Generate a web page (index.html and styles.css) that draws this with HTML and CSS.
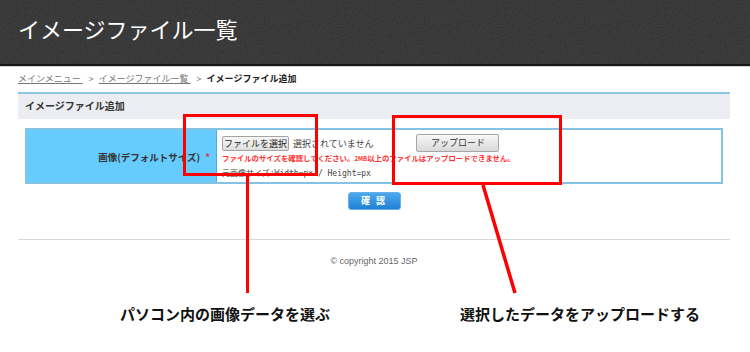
FILE: index.html
```html
<!DOCTYPE html>
<html lang="ja">
<head>
<meta charset="utf-8">
<title>イメージファイル一覧</title>
<link rel="stylesheet" href="styles.css">
</head>
<body>
<div class="page">
  <header class="hdr"><h1 class="hdr-title">イメージファイル一覧</h1></header>
  <main class="wrap">
    <nav class="crumbs">
      <a class="crumb-link" href="#">メインメニュー&nbsp;</a><span class="sep">&gt;</span><a class="crumb-link" href="#">イメージファイル一覧&nbsp;</a><span class="sep">&gt;</span><strong class="crumb-cur">イメージファイル追加</strong>
    </nav>
    <section class="panel">
      <h2 class="panel-title">イメージファイル追加</h2>
      <div class="form-row">
        <div class="label">画像(デフォルトサイズ)<span class="req">*</span></div>
        <div class="field">
          <div class="line1">
            <span class="btn-file">ファイルを選択</span>
            <span class="nofile">選択されていません</span>
            <span class="btn-up">アップロード</span>
          </div>
          <p class="warn">ファイルのサイズを確認してください。<span class="mb">2MB</span>以上のファイルはアップロードできません。</p>
          <p class="dim">元画像サイズ:Width=px / Height=px</p>
        </div>
      </div>
      <div class="actions"><span class="btn-ok">確 認</span></div>
    </section>
    <footer class="foot">© copyright 2015 JSP</footer>
  </main>
  <svg class="marks" width="750" height="352" viewBox="0 0 750 352" aria-hidden="true">
    <rect x="184.5" y="115.5" width="132" height="59" fill="none" stroke="#ff0000" stroke-width="3"/>
    <rect x="393.5" y="116.5" width="167" height="67" fill="none" stroke="#ff0000" stroke-width="3"/>
    <line x1="247.5" y1="176" x2="247.5" y2="293" stroke="#ff0000" stroke-width="3"/>
    <line x1="483" y1="185" x2="515" y2="293" stroke="#ff0000" stroke-width="3.5"/>
  </svg>
  <p class="cap cap1">パソコン内の画像データを選ぶ</p>
  <p class="cap cap2">選択したデータをアップロードする</p>
</div>
</body>
</html>
```
FILE: styles.css
```css
* { box-sizing: border-box; }
html, body { margin: 0; padding: 0; background: #fff; }
body {
  font-family: "Noto Sans CJK JP", "Noto Sans", "Liberation Sans", sans-serif;
  color: #333;
}
.page {
  position: relative;
  width: 750px;
  height: 352px;
  overflow: hidden;
}
.hdr {
  height: 66px;
  background-color: #2d2d2d;
  background-image: url("data:image/svg+xml;utf8,<svg xmlns='http://www.w3.org/2000/svg' width='160' height='160'><filter id='n'><feTurbulence type='fractalNoise' baseFrequency='0.9' numOctaves='2' stitchTiles='stitch'/><feColorMatrix values='0 0 0 0 0.5  0 0 0 0 0.5  0 0 0 0 0.5  0 0 0 0.18 0'/></filter><rect width='160' height='160' filter='url(%23n)'/></svg>");
  border-bottom: 2px solid #141414;
  box-shadow: 0 1px 0 #d6d6d6;
  padding: 13px 0 0 18px;
}
.hdr-title {
  margin: 0;
  font-size: 22px;
  line-height: 30px;
  font-weight: 400;
  color: #fff;
  letter-spacing: 0;
}
.wrap {
  margin: 0 20px 0 18px;
}
.crumbs {
  height: 26px;
  padding-top: 7px;
  font-size: 9px;
  line-height: 12px;
  white-space: nowrap;
}
.crumb-link {
  color: #777;
  text-decoration: underline;
}
.sep {
  color: #777;
  margin: 0 5px 0 6px;
}
.crumb-cur {
  color: #222;
  font-weight: 700;
}
.panel-title {
  margin: 0;
  height: 27px;
  border-top: 2px solid #8cc6e2;
  background: #ebedf2;
  padding: 0 0 0 7px;
  font-size: 10px;
  line-height: 24px;
  font-weight: 700;
  color: #333;
}
.form-row {
  display: flex;
  margin: 9px 7px 0 7px;
  height: 56px;
  border: 2px solid #84c4e2;
}
.label {
  width: 190px;
  background: #66ccff;
  border-right: 1px solid #5aa9d6;
  display: flex;
  align-items: center;
  justify-content: flex-end;
  padding: 2px 6px 0 0;
  font-size: 9.5px;
  font-weight: 700;
  color: #333;
}
.req {
  color: #e53030;
  margin-left: 5px;
}
.field {
  flex: 1;
  padding: 4px 6px 0 5px;
}
.line1 {
  display: flex;
  align-items: center;
  height: 18px;
}
.btn-file {
  height: 15px;
  width: 67px;
  border: 1px solid #a3a3a3;
  border-radius: 2px;
  background: linear-gradient(#f7f7f7, #dedede);
  font-size: 9px;
  line-height: 13px;
  text-align: center;
  color: #222;
}
.nofile {
  margin-left: 4px;
  font-size: 9px;
  color: #444;
}
.btn-up {
  margin-left: 43px;
  width: 83px;
  height: 18px;
  border: 1px solid #a6a6a6;
  border-radius: 2px;
  background: linear-gradient(#f8f8f8, #d9d9d9);
  font-size: 9px;
  line-height: 16px;
  text-align: center;
  color: #333;
}
.warn {
  margin: 0;
  font-size: 7.4px;
  line-height: 11px;
  font-weight: 700;
  color: #ff3030;
  white-space: nowrap;
}
.mb { font-size: 6px; }
.dim {
  margin: 3px 0 0;
  font-family: "DejaVu Sans Mono", "Noto Sans CJK JP", monospace;
  font-size: 8px;
  line-height: 13px;
  color: #444;
  white-space: nowrap;
}
.actions {
  display: flex;
  justify-content: center;
  padding-top: 8px;
}
.btn-ok {
  width: 53px;
  height: 18px;
  border: 1px solid #64b0ea;
  border-radius: 3px;
  background: linear-gradient(#4ea8ec, #2080d6);
  color: #fff;
  font-size: 9px;
  font-weight: 700;
  line-height: 16px;
  text-align: center;
  letter-spacing: 2px;
}
.foot {
  margin-top: 29px;
  border-top: 1px solid #d9d9d9;
  padding-top: 15px;
  text-align: center;
  font-family: "Liberation Sans", Arial, sans-serif;
  font-size: 9px;
  line-height: 12px;
  color: #666;
}
.marks {
  position: absolute;
  left: 0;
  top: 0;
  pointer-events: none;
}
.cap {
  position: absolute;
  margin: 0;
  top: 304px;
  font-size: 15px;
  line-height: 20px;
  font-weight: 700;
  color: #111;
  white-space: nowrap;
}
.cap1 { left: 120px; }
.cap2 { left: 460px; }
```
